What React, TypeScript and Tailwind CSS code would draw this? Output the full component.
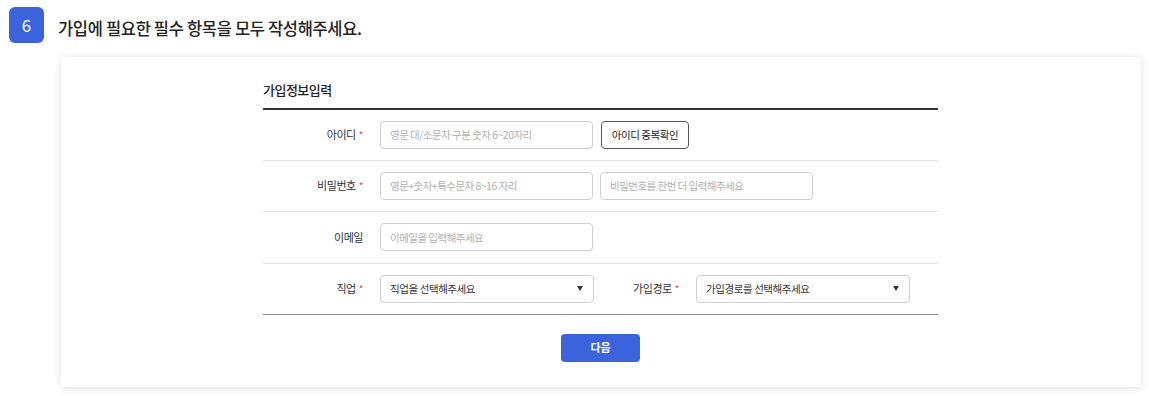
const font = { fontFamily: '"Noto Sans CJK KR", "Noto Sans", sans-serif' };

function Label({ text, required }: { text: string; required?: boolean }) {
  return (
    <div className="flex items-center justify-end text-[11px] text-[#333] tracking-[-0.04em]">
      <span>{text}</span>
      {required && <span className="ml-[3px] text-[10px] text-[#e5484d]">*</span>}
    </div>
  );
}

function TextInput({ placeholder }: { placeholder: string }) {
  return (
    <input
      placeholder={placeholder}
      className="h-[28px] w-[213px] rounded-[4px] border border-[#cfcfcf] px-[9px] text-[10.5px] tracking-[-0.05em] text-[#333] outline-none placeholder:text-[#b0b0b0]"
    />
  );
}

function SelectBox({ text }: { text: string }) {
  return (
    <div className="flex h-[28px] w-[214px] items-center justify-between rounded-[4px] border border-[#cfcfcf] pl-[9px] pr-[10px] text-[10.5px] tracking-[-0.04em] text-[#333]">
      <span>{text}</span>
      <svg width="6" height="5" viewBox="0 0 6 5">
        <path d="M0 0h6L3 5z" fill="#333" />
      </svg>
    </div>
  );
}

export default function App() {
  return (
    <div className="min-h-[396px] bg-white pl-[9px] pt-[7px]" style={font}>
      {/* step header */}
      <div className="flex items-start gap-[14px]">
        <div className="flex h-[36px] w-[35px] items-center justify-center rounded-[6px] bg-[#3b63dc] text-[17px] text-white">
          6
        </div>
        <h2 className="mt-[9px] text-[16.5px] font-medium tracking-[-0.02em] text-[#222] leading-[24px]">
          가입에 필요한 필수 항목을 모두 작성해주세요.
        </h2>
      </div>

      {/* card */}
      <div className="ml-[52px] mt-[14px] w-[1080px] bg-white pb-[25px] pl-[202px] pt-[23px] shadow-[0_1px_8px_rgba(0,0,0,0.13)]">
        <div className="w-[675px]">
          <div className="border-b-2 border-[#333] pb-[8px] text-[13px] font-medium tracking-[-0.04em] text-[#222]">
            가입정보입력
          </div>

          <div className="grid h-[51px] grid-cols-[100px_1fr] items-center gap-x-[17px] border-b border-[#e6e6e6]">
            <Label text="아이디" required />
            <div className="flex items-center gap-[8px]">
              <TextInput placeholder="영문 대/소문자 구분 숫자 6~20자리" />
              <button className="h-[28px] w-[88px] rounded-[4px] border border-[#555] text-[10.5px] tracking-[-0.04em] text-[#222]">
                아이디 중복확인
              </button>
            </div>
          </div>

          <div className="grid h-[51px] grid-cols-[100px_1fr] items-center gap-x-[17px] border-b border-[#e6e6e6]">
            <Label text="비밀번호" required />
            <div className="flex items-center gap-[7px]">
              <TextInput placeholder="영문+숫자+특수문자 8~16 자리" />
              <TextInput placeholder="비밀번호를 한번 더 입력해주세요" />
            </div>
          </div>

          <div className="grid h-[52px] grid-cols-[100px_1fr] items-center gap-x-[17px] border-b border-[#e6e6e6]">
            <Label text="이메일" />
            <div className="flex items-center">
              <TextInput placeholder="이메일을 입력해주세요" />
            </div>
          </div>

          <div className="grid h-[51px] grid-cols-[100px_1fr] items-center gap-x-[17px] border-b border-[#8a8a8a]">
            <Label text="직업" required />
            <div className="flex items-center">
              <SelectBox text="직업을 선택해주세요" />
              <div className="w-[85px]">
                <Label text="가입경로" required />
              </div>
              <div className="ml-[17px]">
                <SelectBox text="가입경로를 선택해주세요" />
              </div>
            </div>
          </div>

          <div className="mt-[19px] flex justify-center">
            <button className="h-[28px] w-[79px] rounded-[4px] bg-[#3b63dc] text-[11px] font-bold text-white">
              다음
            </button>
          </div>
        </div>
      </div>
    </div>
  );
}
